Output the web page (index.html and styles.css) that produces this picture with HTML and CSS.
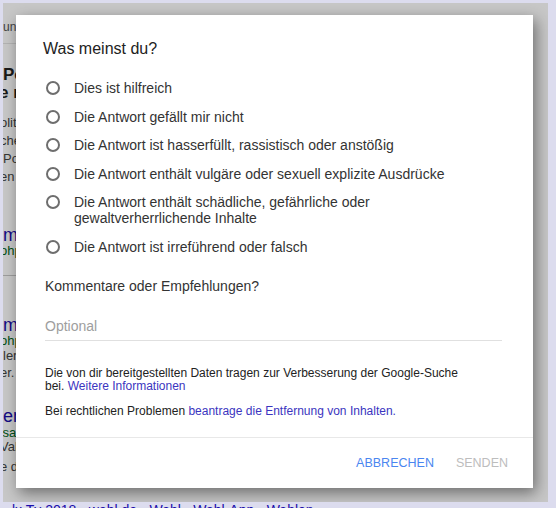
FILE: index.html
```html
<!DOCTYPE html>
<html lang="de">
<head>
<meta charset="utf-8">
<title>Was meinst du?</title>
<link rel="stylesheet" href="styles.css">
</head>
<body>
<div class="window">
  <div class="page">
    <div class="frag f-un">un</div>
    <div class="rule r-top"></div>
    <div class="frag f-title1">Po</div>
    <div class="frag f-title2">e n</div>
    <div class="snippet s1">
      <div class="frag cut">olit</div>
      <div class="frag cut">che</div>
      <div class="frag">Po</div>
      <div class="frag cut">en</div>
    </div>
    <div class="frag link l1">m</div>
    <div class="frag url cut">ohp</div>
    <div class="rule r-mid"></div>
    <div class="frag link l2">m</div>
    <div class="frag url cut u2">ohp</div>
    <div class="frag f-ler">ler</div>
    <div class="frag cut f-er">er.</div>
    <div class="frag link l3">er</div>
    <div class="frag url cut u3">'sa</div>
    <div class="frag cut f-vah">Vah</div>
    <div class="frag cut f-ed">e d</div>
  </div>
  <div class="scrim"></div>
  <div class="dialog" role="dialog">
    <div class="dialog-body">
      <h1 class="dialog-title">Was meinst du?</h1>
      <ul class="options">
        <li class="option"><span class="radio"></span><span class="label">Dies ist hilfreich</span></li>
        <li class="option"><span class="radio"></span><span class="label">Die Antwort gefällt mir nicht</span></li>
        <li class="option"><span class="radio"></span><span class="label">Die Antwort ist hasserfüllt, rassistisch oder anstößig</span></li>
        <li class="option"><span class="radio"></span><span class="label">Die Antwort enthält vulgäre oder sexuell explizite Ausdrücke</span></li>
        <li class="option"><span class="radio"></span><span class="label">Die Antwort enthält schädliche, gefährliche oder gewaltverherrlichende Inhalte</span></li>
        <li class="option"><span class="radio"></span><span class="label">Die Antwort ist irreführend oder falsch</span></li>
      </ul>
      <div class="comment-heading">Kommentare oder Empfehlungen?</div>
      <div class="comment-input">Optional</div>
      <p class="info info-1">Die von dir bereitgestellten Daten tragen zur Verbesserung der Google-Suche bei. <a class="link-inline">Weitere Informationen</a></p>
      <p class="info info-2">Bei rechtlichen Problemen <a class="link-inline">beantrage die Entfernung von Inhalten.</a></p>
    </div>
    <div class="dialog-footer">
      <span class="btn btn-cancel">ABBRECHEN</span>
      <span class="btn btn-send">SENDEN</span>
    </div>
  </div>
</div>
<div class="below">lx Tv 2018 - wahl.de › Wahl › Wahl-App - Wahlen</div>
</body>
</html>
```

FILE: styles.css
```css
html, body {
  margin: 0;
  padding: 0;
}

body {
  width: 556px;
  height: 508px;
  overflow: hidden;
  background: #dcdcee;
  font-family: "Liberation Sans", Arial, sans-serif;
}

.window {
  position: relative;
  margin: 3px 8px 0 3px;
  height: 499px;
  background: #ffffff;
  overflow: hidden;
}

/* underlying results page (dimmed) */
.page {
  width: 200px;
  color: #333;
}

.frag {
  font-size: 13px;
  line-height: 18px;
  height: 18px;
  white-space: nowrap;
}

.cut {
  margin-left: -3px;
}

.f-un {
  margin-top: 17px;
  font-size: 12px;
  line-height: 14px;
  height: 14px;
  color: #555;
}

.rule {
  height: 1px;
  background: #e4e4e4;
}

.r-top {
  margin-top: 9px;
}

.f-title1 {
  margin-top: 22px;
  font-size: 17px;
  font-weight: bold;
  color: #222;
}

.f-title2 {
  font-size: 17px;
  font-weight: bold;
  color: #222;
  margin-left: -4px;
}

.s1 {
  margin-top: 12px;
  color: #444;
}

.link {
  color: #1a0dab;
  font-size: 18px;
}

.l1 {
  margin-top: 41px;
  line-height: 17px;
  height: 17px;
}

.url {
  color: #006621;
  font-size: 13px;
  line-height: 13px;
  height: 13px;
}

.r-mid {
  margin-top: 18px;
  background: #c8c8c8;
}

.l2 {
  margin-top: 41px;
  line-height: 17px;
  height: 17px;
}

.f-ler, .f-er, .f-vah, .f-ed {
  color: #444;
}

.f-ler, .f-er {
  line-height: 17px;
  height: 17px;
}

.l3 {
  margin-top: 27px;
  line-height: 17px;
  height: 17px;
}

.u3 {
  margin-top: 1px;
}

.f-vah {
  line-height: 16px;
  height: 16px;
}

.f-ed {
  margin-top: 3px;
}

.scrim {
  position: absolute;
  inset: 0;
  background: rgba(0, 0, 0, 0.22);
}

/* dialog */
.dialog {
  position: absolute;
  left: 13px;
  top: 12px;
  width: 517px;
  height: 473px;
  background: #ffffff;
  display: flex;
  flex-direction: column;
  box-shadow: 3px 5px 14px rgba(0, 0, 0, 0.45);
}

.dialog-body {
  flex: 1;
  padding: 24px 31px 0 29px;
}

.dialog-title {
  margin: 0 0 0 -2px;
  font-size: 16px;
  line-height: 20px;
  font-weight: normal;
  color: #222;
}

.options {
  list-style: none;
  margin: 14.7px 0 0 0;
  padding: 0;
}

.option {
  display: flex;
  align-items: flex-start;
  padding: 6.3px 0 6.3px 1px;
}

.radio {
  flex: none;
  width: 10px;
  height: 10px;
  margin-top: 1px;
  border: 2px solid #6e6e6e;
  border-radius: 50%;
}

.label {
  margin-left: 14px;
  font-size: 14px;
  line-height: 16px;
  color: #333;
}

.comment-heading {
  margin-top: 16.7px;
  font-size: 14px;
  line-height: 16px;
  color: #333;
}

.comment-input {
  margin-top: 24px;
  padding-bottom: 6px;
  font-size: 14px;
  line-height: 16px;
  color: #9e9e9e;
  border-bottom: 1px solid #e0e0e0;
}

.info {
  margin: 0;
  font-size: 12px;
  line-height: 13px;
  color: #222;
  max-width: 425px;
}

.info-1 {
  margin-top: 26.5px;
}

.info-2 {
  margin-top: 11.7px;
}

.link-inline {
  color: #3b35c0;
}

.dialog-footer {
  flex: none;
  height: 50px;
  border-top: 1px solid #e8e8e8;
  display: flex;
  justify-content: flex-end;
  align-items: center;
  gap: 22px;
  padding-right: 25px;
}

.btn {
  font-size: 12.5px;
  line-height: 16px;
}

.btn-cancel {
  color: #4a86f0;
}

.btn-send {
  color: #bdbdbd;
}

.below {
  margin-left: 12px;
  font-size: 14px;
  line-height: 16px;
  margin-top: 0;
  color: #1a0dab;
  white-space: nowrap;
}
```
